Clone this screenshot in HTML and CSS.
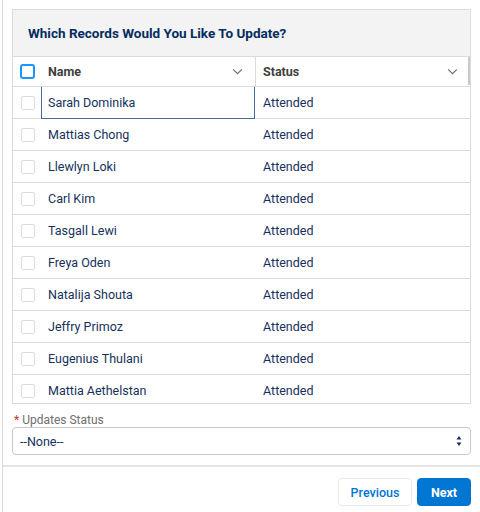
FILE: index.html
```html
<!DOCTYPE html>
<html>
<head>
<meta charset="utf-8">
<link rel="stylesheet" href="styles.css">
</head>
<body>
<div class="frame">
  <div class="content">
    <div class="card">
      <div class="card-header">Which Records Would You Like To Update?</div>
      <div class="thead">
        <div class="cell cb-cell"><span class="cb cb-focus"></span></div>
        <div class="cell th name-col"><span>Name</span><svg class="chev" viewBox="0 0 12 8"><path d="M1 1.5 L6 6.5 L11 1.5" fill="none" stroke="#706e6b" stroke-width="1.3"/></svg></div>
        <div class="cell th status-col"><span>Status</span><svg class="chev" viewBox="0 0 12 8"><path d="M1 1.5 L6 6.5 L11 1.5" fill="none" stroke="#706e6b" stroke-width="1.3"/></svg></div>
        <div class="scroll-thumb"></div>
      </div>
      <div class="tbody">
        <div class="row"><div class="cell cb-cell"><span class="cb"></span></div><div class="cell td name-col focused">Sarah Dominika</div><div class="cell td status-col">Attended</div></div>
        <div class="row"><div class="cell cb-cell"><span class="cb"></span></div><div class="cell td name-col">Mattias Chong</div><div class="cell td status-col">Attended</div></div>
        <div class="row"><div class="cell cb-cell"><span class="cb"></span></div><div class="cell td name-col">Llewlyn Loki</div><div class="cell td status-col">Attended</div></div>
        <div class="row"><div class="cell cb-cell"><span class="cb"></span></div><div class="cell td name-col">Carl Kim</div><div class="cell td status-col">Attended</div></div>
        <div class="row"><div class="cell cb-cell"><span class="cb"></span></div><div class="cell td name-col">Tasgall Lewi</div><div class="cell td status-col">Attended</div></div>
        <div class="row"><div class="cell cb-cell"><span class="cb"></span></div><div class="cell td name-col">Freya Oden</div><div class="cell td status-col">Attended</div></div>
        <div class="row"><div class="cell cb-cell"><span class="cb"></span></div><div class="cell td name-col">Natalija Shouta</div><div class="cell td status-col">Attended</div></div>
        <div class="row"><div class="cell cb-cell"><span class="cb"></span></div><div class="cell td name-col">Jeffry Primoz</div><div class="cell td status-col">Attended</div></div>
        <div class="row"><div class="cell cb-cell"><span class="cb"></span></div><div class="cell td name-col">Eugenius Thulani</div><div class="cell td status-col">Attended</div></div>
        <div class="row"><div class="cell cb-cell"><span class="cb"></span></div><div class="cell td name-col">Mattia Aethelstan</div><div class="cell td status-col">Attended</div></div>
      </div>
    </div>
    <div class="field">
      <div class="label"><span class="req">*</span>Updates Status</div>
      <div class="select">
        <span>--None--</span>
        <span class="arrows"><svg viewBox="0 0 6 12" width="6" height="12"><path d="M3 1 L5.5 4.5 L0.5 4.5 Z M3 11 L5.5 7.5 L0.5 7.5 Z" fill="#16325c"/></svg></span>
      </div>
    </div>
  </div>
  <div class="footer">
    <button class="btn btn-neutral">Previous</button>
    <button class="btn btn-brand">Next</button>
  </div>
</div>
</body>
</html>
```
FILE: styles.css
```css
html, body {
  margin: 0;
  padding: 0;
  background: #fff;
}
body {
  font-family: Roboto, "Noto Sans", "Liberation Sans", sans-serif;
  font-size: 12.5px;
  color: #16325c;
}
.frame {
  margin-left: 2px;
  border-left: 1px solid #dddbda;
  height: 512px;
  box-sizing: border-box;
}
.content {
  padding: 9px 9px 10px 9px;
  border-bottom: 2px solid #e5e5e5;
}
.card {
  border: 1px solid #dddbda;
  box-sizing: border-box;
  position: relative;
}
.card-header {
  background: #f3f3f3;
  height: 46px;
  border-bottom: 1px solid #dddbda;
  display: flex;
  align-items: center;
  padding-left: 15px;
  font-weight: 700;
  font-size: 13.5px;
  color: #032d60;
}
.thead, .row {
  display: grid;
  grid-template-columns: 28px 214px 1fr;
}
.thead {
  height: 29px;
  border-bottom: 1px solid #dddbda;
  position: relative;
}
.tbody {
  height: 316px;
  overflow: hidden;
}
.row {
  height: 31px;
  border-bottom: 1px solid #dddbda;
}
.cell {
  display: flex;
  align-items: center;
  box-sizing: border-box;
  min-width: 0;
}
.cb-cell {
  justify-content: center;
  padding-left: 1px;
}
.cb {
  width: 14px;
  height: 14px;
  border: 1px solid #dddbda;
  border-radius: 2px;
  box-sizing: border-box;
  background: #fff;
}
.cb-focus {
  border: 2px solid #1b96ff;
  border-radius: 3px;
  width: 15px;
  height: 15px;
}
.th {
  justify-content: space-between;
  font-weight: 700;
  color: #3e3e3c;
  padding-left: 7px;
  padding-right: 12px;
}
.th.status-col {
  border-left: 1px solid #dddbda;
  padding-left: 7px;
  padding-right: 12px;
}
.td {
  padding-left: 7px;
}
.td.status-col {
  padding-left: 8px;
}
.focused {
  border: 1px solid #4a6a9c;
  margin: -1px 0 -1px 0;
  height: 33px;
  padding-left: 6px;
}
.chev {
  width: 11px;
  height: 7px;
}
.scroll-thumb {
  position: absolute;
  right: 0;
  top: 0;
  width: 2px;
  height: 28px;
  background: #c9c9c9;
}
.field {
  margin-top: 9px;
}
.label {
  font-size: 12px;
  color: #706e6b;
  height: 14px;
  line-height: 14px;
  margin-bottom: 0;
  padding-left: 2px;
}
.req {
  color: #c23934;
  margin-right: 3px;
}
.select {
  height: 28px;
  border: 1px solid #c9c9c9;
  border-radius: 4px;
  box-sizing: border-box;
  display: flex;
  align-items: center;
  justify-content: space-between;
  padding: 0 8px 0 7px;
  font-size: 12.5px;
  color: #16325c;
}
.arrows {
  display: flex;
  align-items: center;
}
.footer {
  display: flex;
  justify-content: flex-end;
  gap: 5px;
  padding: 11px 9px 0 0;
}
.btn {
  height: 28px;
  border-radius: 4px;
  font-family: inherit;
  font-size: 12.5px;
  font-weight: 500;
  padding: 0 10px;
  cursor: pointer;
}
.btn-neutral {
  background: #fff;
  border: 1px solid #ecebea;
  color: #0176d3;
  width: 74px;
}
.btn-brand {
  background: #0176d3;
  border: 1px solid #0176d3;
  color: #fff;
  font-weight: 700;
  width: 54px;
}
```
